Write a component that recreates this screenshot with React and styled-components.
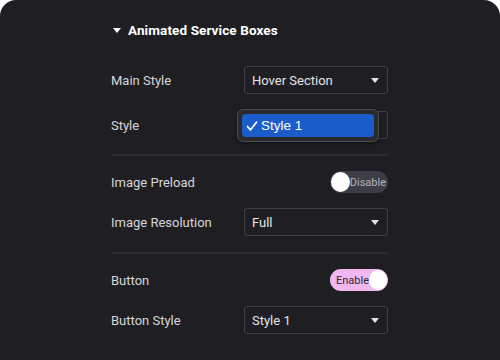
import React from 'react'
import styled, { createGlobalStyle } from 'styled-components'

const GlobalStyle = createGlobalStyle`
  html, body {
    margin: 0;
    padding: 0;
    background: #ffffff;
  }
  body {
    font-family: Roboto, "Liberation Sans", sans-serif;
  }
`

const Panel = styled.div`
  width: 500px;
  height: 360px;
  box-sizing: border-box;
  background: #1f1f23;
  border-radius: 16px 16px 0 0;
  padding: 18px 112px 0 111px;
  overflow: hidden;
`

const Header = styled.div`
  display: flex;
  align-items: center;
  gap: 7px;
  height: 24px;
  color: #ffffff;
  font-weight: 700;
  font-size: 13.5px;
  letter-spacing: 0.1px;
  padding-left: 2px;
`

const Caret = styled.span`
  width: 0;
  height: 0;
  border-left: 4px solid transparent;
  border-right: 4px solid transparent;
  border-top: 5px solid ${p => p.$color || '#ffffff'};
`

const Row = styled.div`
  position: relative;
  display: flex;
  align-items: center;
  justify-content: space-between;
  height: 28px;
  margin-top: ${p => p.$gap}px;
`

const Label = styled.span`
  color: #d6d6da;
  font-size: 13px;
`

const Select = styled.div`
  box-sizing: border-box;
  width: 144px;
  height: 28px;
  border: 1px solid #3e3e45;
  border-radius: 3px;
  display: flex;
  align-items: center;
  justify-content: space-between;
  padding: 0 8px 0 7px;
  color: #e4e4e7;
  font-size: 13px;
`

const Popup = styled.div`
  position: absolute;
  left: 126px;
  top: -2px;
  box-sizing: border-box;
  width: 142px;
  height: 33px;
  padding: 4px;
  background: #2a2a2e;
  border: 1px solid #4a4a50;
  border-radius: 6px;
  box-shadow: 0 2px 6px rgba(0, 0, 0, 0.4);
`

const Option = styled.div`
  height: 23px;
  border-radius: 4px;
  background: #1b5ccb;
  color: #ffffff;
  font-family: "Liberation Sans", Arial, sans-serif;
  font-size: 13.5px;
  display: flex;
  align-items: center;
  gap: 3px;
  padding-left: 4px;
`

const Divider = styled.div`
  height: 2px;
  background: #2c2c31;
  margin-top: ${p => p.$gap}px;
`

const Toggle = styled.div`
  box-sizing: border-box;
  width: 58px;
  height: 22px;
  border-radius: 11px;
  background: ${p => (p.$on ? '#f1b7f1' : '#3d3e45')};
  display: flex;
  flex-direction: ${p => (p.$on ? 'row-reverse' : 'row')};
  align-items: center;
  justify-content: space-between;
  padding: 0 1px;
  font-size: 11px;
  color: ${p => (p.$on ? '#2b2b30' : '#b4b5bb')};
`

const Knob = styled.span`
  width: 20px;
  height: 20px;
  border-radius: 50%;
  background: #ffffff;
`

const ToggleText = styled.span`
  padding: ${p => (p.$on ? '0 0 0 5px' : '0 1px 0 0')};
`

const Check = () => (
  <svg width='12' height='12' viewBox='0 0 12 12'>
    <path d='M1.5 6.5 L4.5 9.8 L10.5 2.2' fill='none' stroke='#fff' strokeWidth='1.8' strokeLinecap='round' strokeLinejoin='round' />
  </svg>
)

const Dropdown = ({ value }) => (
  <Select>
    <span>{value}</span>
    <Caret $color='#e4e4e7' />
  </Select>
)

const App = () => {
  return (
    <>
      <GlobalStyle />
      <Panel>
        <Header>
          <Caret />
          <span>Animated Service Boxes</span>
        </Header>

        <Row $gap={24}>
          <Label>Main Style</Label>
          <Dropdown value='Hover Section' />
        </Row>
        <Row $gap={17}>
          <Label>Style</Label>
          <Dropdown value='' />
          <Popup>
            <Option>
              <Check />
              <span>Style 1</span>
            </Option>
          </Popup>
        </Row>
        <Divider $gap={15} />

        <Row $gap={12}>
          <Label>Image Preload</Label>
          <Toggle>
            <Knob />
            <ToggleText>Disable</ToggleText>
          </Toggle>
        </Row>
        <Row $gap={12}>
          <Label>Image Resolution</Label>
          <Dropdown value='Full' />
        </Row>
        <Divider $gap={16} />

        <Row $gap={12}>
          <Label>Button</Label>
          <Toggle $on>
            <Knob />
            <ToggleText $on>Enable</ToggleText>
          </Toggle>
        </Row>
        <Row $gap={12}>
          <Label>Button Style</Label>
          <Dropdown value='Style 1' />
        </Row>
      </Panel>
    </>
  )
}

export default App
